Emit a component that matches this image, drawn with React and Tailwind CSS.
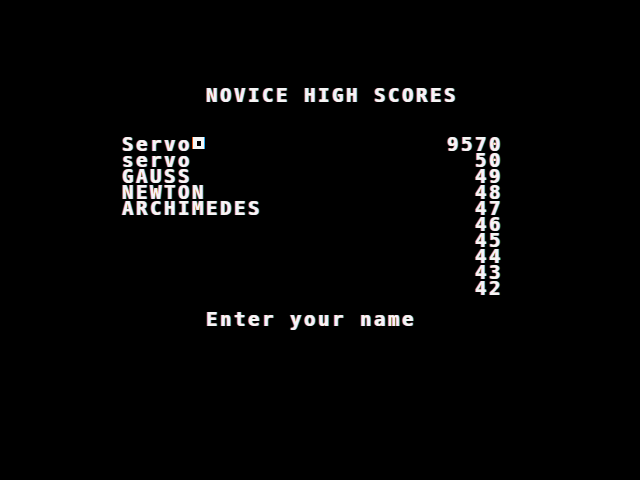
export default function App() {
  const rows = [
    ["Servo", "9570", true],
    ["servo", "50"],
    ["GAUSS", "49"],
    ["NEWTON", "48"],
    ["ARCHIMEDES", "47"],
    ["", "46"],
    ["", "45"],
    ["", "44"],
    ["", "43"],
    ["", "42"],
  ];
  const txt =
    "text-[19px] leading-[16px] font-bold tracking-[2.56px] text-[#f6f6f6] whitespace-pre [text-shadow:-1px_0_#e0561a,1px_0_#22a8ee]";
  return (
    <div
      className="w-[640px] h-[480px] bg-black overflow-hidden flex flex-col"
      style={{ fontFamily: '"DejaVu Sans Mono", "Liberation Mono", monospace' }}
    >
      <div className={`${txt} h-[16px] mt-[87px] ml-[206px]`}>NOVICE HIGH SCORES</div>
      <div className="mt-[33px] ml-[122px] w-[381px] flex flex-col">
        {rows.map(([name, score, cursor], i) => (
          <div key={i} className="h-[16px] flex justify-between items-start">
            <div className={`${txt} flex items-start`}>
              <span>{name}</span>
              {cursor && (
                <span className="ml-[1px] mt-[1px] w-[11px] h-[12px] bg-[#f6f6f6] flex items-center justify-center shadow-[-1px_0_0_#e0561a,1px_0_0_#22a8ee]">
                  <span className="w-[4px] h-[5px] bg-black" />
                </span>
              )}
            </div>
            <div className={txt}>{score}</div>
          </div>
        ))}
      </div>
      <div className={`${txt} h-[16px] mt-[15px] ml-[206px]`}>Enter your name</div>
    </div>
  );
}
